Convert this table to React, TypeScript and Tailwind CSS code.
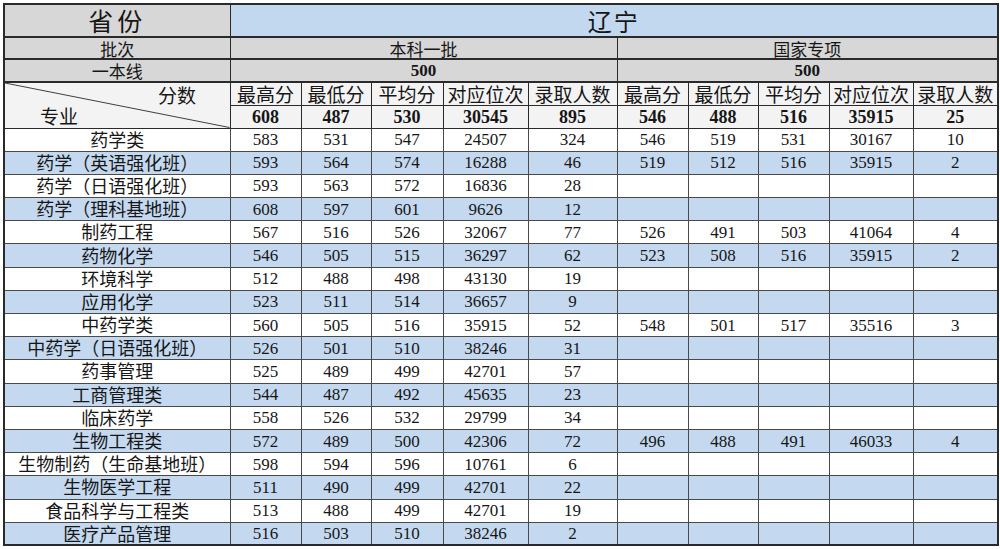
import React from "react";

type Row = {
  name: string;
  a: string[];
  b?: string[];
};

const ROWS: Row[] = [
  { name: "药学类", a: ["583", "531", "547", "24507", "324"], b: ["546", "519", "531", "30167", "10"] },
  { name: "药学（英语强化班）", a: ["593", "564", "574", "16288", "46"], b: ["519", "512", "516", "35915", "2"] },
  { name: "药学（日语强化班）", a: ["593", "563", "572", "16836", "28"] },
  { name: "药学（理科基地班）", a: ["608", "597", "601", "9626", "12"] },
  { name: "制药工程", a: ["567", "516", "526", "32067", "77"], b: ["526", "491", "503", "41064", "4"] },
  { name: "药物化学", a: ["546", "505", "515", "36297", "62"], b: ["523", "508", "516", "35915", "2"] },
  { name: "环境科学", a: ["512", "488", "498", "43130", "19"] },
  { name: "应用化学", a: ["523", "511", "514", "36657", "9"] },
  { name: "中药学类", a: ["560", "505", "516", "35915", "52"], b: ["548", "501", "517", "35516", "3"] },
  { name: "中药学（日语强化班）", a: ["526", "501", "510", "38246", "31"] },
  { name: "药事管理", a: ["525", "489", "499", "42701", "57"] },
  { name: "工商管理类", a: ["544", "487", "492", "45635", "23"] },
  { name: "临床药学", a: ["558", "526", "532", "29799", "34"] },
  { name: "生物工程类", a: ["572", "489", "500", "42306", "72"], b: ["496", "488", "491", "46033", "4"] },
  { name: "生物制药（生命基地班）", a: ["598", "594", "596", "10761", "6"] },
  { name: "生物医学工程", a: ["511", "490", "499", "42701", "22"] },
  { name: "食品科学与工程类", a: ["513", "488", "499", "42701", "19"] },
  { name: "医疗产品管理", a: ["516", "503", "510", "38246", "2"] },
];

const WIDTHS = [226, 71, 70, 72, 85, 89, 71, 70, 71, 84, 85];
const HEADS = ["最高分", "最低分", "平均分", "对应位次", "录取人数"];

const cjk = "font-['Noto_Sans_CJK_SC',sans-serif]";
const num = "font-['Liberation_Serif','Noto_Sans_CJK_SC',serif]";

export default function App() {
  return (
    <div className="w-[1000px] h-[549px] bg-white pt-[3px] pl-[3px] overflow-hidden">
      <table className="table-fixed border-collapse border-2 border-[#2a2a2a] text-[#161616] w-[994px]">
        <colgroup>
          {WIDTHS.map((w, i) => (
            <col key={i} style={{ width: w }} />
          ))}
        </colgroup>
        <tbody>
          <tr className="h-[33px]">
            <td className={`bg-[#d7d7d7] border-r border-[#2a2a2a] border-b-2 text-center text-[25px] leading-none tracking-[4px] ${cjk}`}>
              省份
            </td>
            <td colSpan={10} className={`bg-[#c2d8ee] border-b-2 border-[#2a2a2a] text-center text-[24px] leading-none tracking-[2px] ${cjk}`}>
              辽宁
            </td>
          </tr>
          <tr className="h-[22px]">
            <td className={`bg-[#d7d7d7] border-r border-b-2 border-[#2a2a2a] text-center text-[17px] leading-none ${cjk}`}>
              批次
            </td>
            <td colSpan={5} className={`bg-[#d7d7d7] border-r border-b-2 border-[#2a2a2a] text-center text-[17px] leading-none ${cjk}`}>
              本科一批
            </td>
            <td colSpan={5} className={`bg-[#d7d7d7] border-b-2 border-[#2a2a2a] text-center text-[17px] leading-none ${cjk}`}>
              国家专项
            </td>
          </tr>
          <tr className="h-[23px]">
            <td className={`bg-[#d7d7d7] border-r border-b-2 border-[#2a2a2a] text-center text-[17px] leading-none ${cjk}`}>
              一本线
            </td>
            <td colSpan={5} className={`bg-[#d7d7d7] border-r border-b-2 border-[#2a2a2a] text-center text-[17px] font-bold leading-none ${num}`}>
              500
            </td>
            <td colSpan={5} className={`bg-[#d7d7d7] border-b-2 border-[#2a2a2a] text-center text-[17px] font-bold leading-none ${num}`}>
              500
            </td>
          </tr>
          <tr className="h-[23px]">
            <td rowSpan={2} className="relative bg-[#f3f3f3] border-r border-b border-[#2a2a2a] p-0">
              <svg className="absolute inset-0 w-full h-full" viewBox="0 0 226 46" preserveAspectRatio="none">
                <line x1="0" y1="0" x2="226" y2="46" stroke="#3a3a3a" strokeWidth="1" />
              </svg>
              <span className={`absolute left-[153px] top-[2px] text-[19px] leading-[19px] ${cjk}`}>分数</span>
              <span className={`absolute left-[35px] bottom-[3px] text-[19px] leading-[19px] ${cjk}`}>专业</span>
            </td>
            {[...HEADS, ...HEADS].map((h, i) => (
              <td
                key={i}
                className={`bg-[#f3f3f3] border-r border-b border-[#2a2a2a] text-center text-[19px] leading-[19px] whitespace-nowrap ${cjk}`}
              >
                {h}
              </td>
            ))}
          </tr>
          <tr className="h-[23px]">
            {["608", "487", "530", "30545", "895", "546", "488", "516", "35915", "25"].map((v, i) => (
              <td
                key={i}
                className={`bg-[#f3f3f3] border-r border-b border-[#2a2a2a] text-center text-[18px] font-bold leading-[18px] ${num}`}
              >
                {v}
              </td>
            ))}
          </tr>
          {ROWS.map((r, idx) => {
            const bg = idx % 2 === 1 ? "bg-[#c4d9ef]" : "bg-white";
            const b = r.b ?? ["", "", "", "", ""];
            return (
              <tr key={r.name} className={`h-[23.2px] ${bg}`}>
                <td className={`border-r border-b border-[#4a4a4a] p-0 text-center text-[18px] leading-[18px] whitespace-nowrap ${cjk}`}>
                  <span className="relative -top-[1px]">{r.name}</span>
                </td>
                {[...r.a, ...b].map((v, i) => (
                  <td
                    key={i}
                    className={`border-r border-b border-[#4a4a4a] p-0 text-center text-[17px] leading-[17px] ${num}`}
                  >
                    {v}
                  </td>
                ))}
              </tr>
            );
          })}
        </tbody>
      </table>
    </div>
  );
}
